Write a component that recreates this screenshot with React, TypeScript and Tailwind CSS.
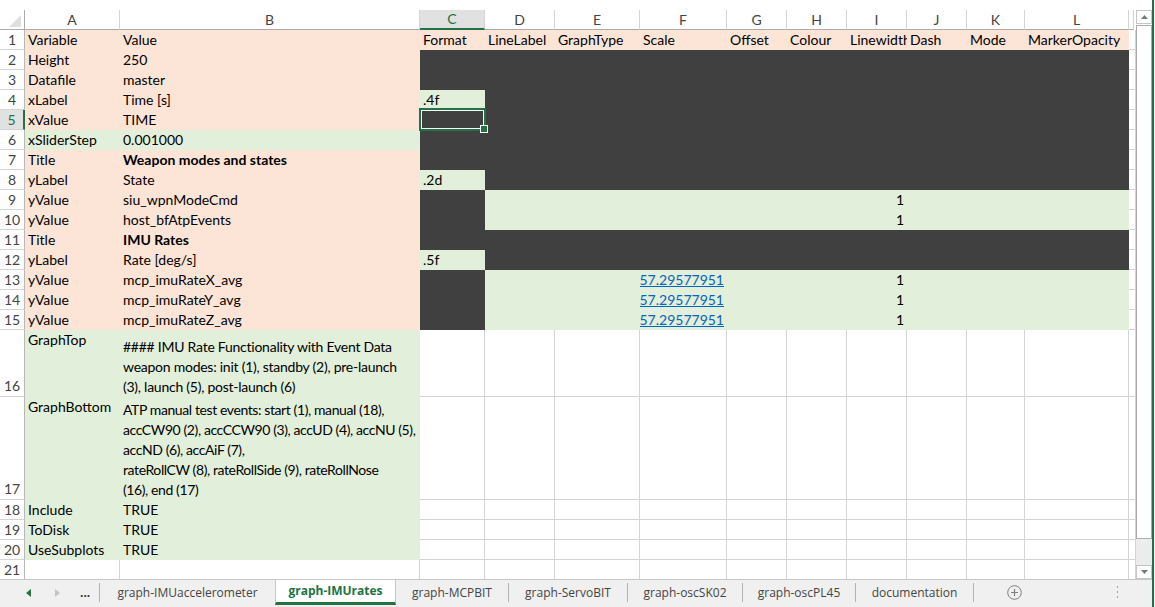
import type { ReactNode } from "react"
import clsx from "clsx"

// column widths include the right gridline pixel
const COLS = [
  { l: "A", w: "w-[95px]" },
  { l: "B", w: "w-[300px]" },
  { l: "C", w: "w-[65px]" },
  { l: "D", w: "w-[70px]" },
  { l: "E", w: "w-[85px]" },
  { l: "F", w: "w-[87px]" },
  { l: "G", w: "w-[60px]" },
  { l: "H", w: "w-[60px]" },
  { l: "I", w: "w-[60px]" },
  { l: "J", w: "w-[60px]" },
  { l: "K", w: "w-[58px]" },
  { l: "L", w: "w-[104px]" },
  { l: "", w: "w-[5px]" },
]

const KIND: Record<string, string> = {
  p: "bg-[#fce4d6]",
  g: "bg-[#e2efda]",
  d: "bg-[#404040]",
  s: "bg-[#404040]",
  w: "bg-white border-r border-b border-[#d4d4d4]",
  v: "bg-white border-r border-[#d4d4d4]",
}

type Cell = string | { t: ReactNode; right?: boolean; bold?: boolean; link?: boolean }

interface RowDef {
  n: number
  kinds: string
  h?: string
  cells?: Record<number, Cell>
  tall?: boolean
  sel?: boolean
}

const DARK = "ppddddddddddw"
const FMT = "ppgdddddddddw"
const DATA = "ppdgggggggggw"
const NOTE = "ggwwwwwwwwwww"

const one = { t: "1", right: true }
const scale = { t: "57.29577951", right: true, link: true }

const ROWS: RowDef[] = [
  {
    n: 1,
    kinds: "ppppppppppppw",
    cells: {
      0: "Variable", 1: "Value", 2: "Format", 3: "LineLabel", 4: "GraphType", 5: "Scale",
      6: "Offset", 7: "Colour", 8: "Linewidth", 9: "Dash", 10: "Mode", 11: "MarkerOpacity",
    },
  },
  { n: 2, kinds: DARK, cells: { 0: "Height", 1: "250" } },
  { n: 3, kinds: DARK, cells: { 0: "Datafile", 1: "master" } },
  { n: 4, kinds: FMT, cells: { 0: "xLabel", 1: "Time [s]", 2: ".4f" } },
  { n: 5, kinds: "ppsdddddddddw", cells: { 0: "xValue", 1: "TIME" }, sel: true },
  { n: 6, kinds: "ggddddddddddw", cells: { 0: "xSliderStep", 1: "0.001000" } },
  { n: 7, kinds: DARK, cells: { 0: "Title", 1: { t: "Weapon modes and states", bold: true } } },
  { n: 8, kinds: FMT, cells: { 0: "yLabel", 1: "State", 2: ".2d" } },
  { n: 9, kinds: DATA, cells: { 0: "yValue", 1: "siu_wpnModeCmd", 8: one } },
  { n: 10, kinds: DATA, cells: { 0: "yValue", 1: "host_bfAtpEvents", 8: one } },
  { n: 11, kinds: DARK, cells: { 0: "Title", 1: { t: "IMU Rates", bold: true } } },
  { n: 12, kinds: FMT, cells: { 0: "yLabel", 1: "Rate [deg/s]", 2: ".5f" } },
  { n: 13, kinds: DATA, cells: { 0: "yValue", 1: "mcp_imuRateX_avg", 5: scale, 8: one } },
  { n: 14, kinds: DATA, cells: { 0: "yValue", 1: "mcp_imuRateY_avg", 5: scale, 8: one } },
  { n: 15, kinds: DATA, cells: { 0: "yValue", 1: "mcp_imuRateZ_avg", 5: scale, 8: one } },
  {
    n: 16,
    kinds: NOTE,
    h: "h-[67px]",
    tall: true,
    cells: {
      0: "GraphTop",
      1: {
        t: (
          <div className="tracking-[-0.25px]">
            <div>#### IMU Rate Functionality with Event Data</div>
            <div>weapon modes: init (1), standby (2), pre-launch</div>
            <div>(3), launch (5), post-launch (6)</div>
          </div>
        ),
      },
    },
  },
  {
    n: 17,
    kinds: NOTE,
    h: "h-[103px]",
    tall: true,
    cells: {
      0: "GraphBottom",
      1: {
        t: (
          <div className="tracking-[-0.4px]">
            <div>ATP manual test events: start (1), manual (18),</div>
            <div>accCW90 (2), accCCW90 (3), accUD (4), accNU (5),</div>
            <div>accND (6), accAiF (7),</div>
            <div>rateRollCW (8), rateRollSide (9), rateRollNose</div>
            <div>(16), end (17)</div>
          </div>
        ),
      },
    },
  },
  { n: 18, kinds: NOTE, cells: { 0: "Include", 1: "TRUE" } },
  { n: 19, kinds: NOTE, cells: { 0: "ToDisk", 1: "TRUE" } },
  { n: 20, kinds: NOTE, cells: { 0: "UseSubplots", 1: "TRUE" } },
  { n: 21, kinds: "vvvvvvvvvvvvv", h: "h-[19px]" },
]

function SheetRow({ row }: { row: RowDef }) {
  return (
    <div className={clsx("flex", row.h ?? "h-[20px]")}>
      <div
        className={clsx(
          "flex w-[25px] shrink-0 justify-center border-r border-b border-b-[#d4d4d4]",
          row.tall ? "items-end" : "items-center",
          row.sel ? "border-r-2 border-r-[#217346] bg-[#e1e1e1] text-[#217346]" : "border-r-[#b8b8b8] text-[#444]",
          row.n === 21 && "border-b-0"
        )}
      >
        {row.n}
      </div>
      {COLS.map((col, i) => {
        const raw = row.cells?.[i]
        const c = typeof raw === "string" ? { t: raw } : raw
        return (
          <div
            key={i}
            className={clsx(
              "flex shrink-0 overflow-hidden whitespace-nowrap px-[3px]",
              col.w,
              KIND[row.kinds[i]],
              row.tall ? (i === 1 ? "items-end" : "items-start") : "items-center",
              c?.right && "justify-end",
              c?.bold && "font-bold",
              c?.link && "text-[#0563c1] underline"
            )}
          >
            {c?.t}
          </div>
        )
      })}
    </div>
  )
}

function ColumnHeader() {
  return (
    <div className="flex h-[20px]">
      <div className="relative w-[25px] shrink-0 border-r border-b border-[#ababab]">
        <svg className="absolute left-0 top-0" width="24" height="19" viewBox="0 0 24 19">
          <polygon points="9,17 21,17 21,5" fill="#dfdfdf" />
        </svg>
      </div>
      {COLS.map((col) => (
        <div
          key={col.l}
          className={clsx(
            "flex shrink-0 items-center justify-center border-r border-b border-r-[#d4d4d4]",
            col.w,
            col.l === "C"
              ? "border-b-2 border-b-[#217346] bg-[#e1e1e1] text-[#217346]"
              : "border-b-[#ababab] text-[#444]"
          )}
        >
          {col.l}
        </div>
      ))}
    </div>
  )
}

function Sheet() {
  return (
    <div className="relative w-[1134px] shrink-0 pt-[10px] font-['Lato',sans-serif] text-[14px] leading-[20px] text-black">
      <ColumnHeader />
      {ROWS.map((r) => (
        <SheetRow key={r.n} row={r} />
      ))}
      {/* active cell C5 */}
      <div className="absolute left-[419px] top-[108px] h-[23px] w-[67px] border-2 border-[#217346]">
        <div className="h-full w-full border border-white" />
      </div>
      <div className="absolute left-[480px] top-[125px] h-[8px] w-[8px] border border-white bg-[#217346]" />
    </div>
  )
}

function ScrollBar() {
  return (
    <div className="flex w-[18px] shrink-0 flex-col pl-[2px] pt-[10px]">
      <div className="flex h-[14px] items-center justify-center border border-[#c6c6c6] bg-white">
        <svg width="7" height="4" viewBox="0 0 7 4">
          <polygon points="0,4 7,4 3.5,0" fill="#7a7a7a" />
        </svg>
      </div>
      <div className="mt-[1px] h-[514px] border border-[#ababab] bg-white" />
      <div className="flex-1 bg-[#ececec]" />
      <div className="flex h-[14px] items-center justify-center border border-[#c6c6c6] bg-white">
        <svg width="7" height="4" viewBox="0 0 7 4">
          <polygon points="0,0 7,0 3.5,4" fill="#7a7a7a" />
        </svg>
      </div>
    </div>
  )
}

function Sep() {
  return <span className="mt-[3px] h-[19px] w-px shrink-0 bg-[#b4b4b4]" />
}

function Tab({ label, w }: { label: string; w: string }) {
  return <div className={clsx("flex shrink-0 items-center justify-center pb-[2px]", w)}>{label}</div>
}

function TabBar() {
  return (
    <div className="flex h-[28px] border-t border-[#c6c6c6] bg-[#f0f0f0] font-['Open_Sans',sans-serif] text-[12px] text-[#444]">
      <div className="flex w-[99px] shrink-0 items-center pb-[2px]">
        <svg className="ml-[26px]" width="5" height="8" viewBox="0 0 5 8">
          <polygon points="5,0 5,8 0,4" fill="#217346" />
        </svg>
        <svg className="ml-[24px]" width="5" height="8" viewBox="0 0 5 8">
          <polygon points="0,0 0,8 5,4" fill="#c4c4c4" />
        </svg>
        <span className="ml-[20px] font-bold text-[#333]">...</span>
      </div>
      <Sep />
      <Tab label="graph-IMUaccelerometer" w="w-[175px]" />
      <div className="flex h-[25px] w-[121px] shrink-0 items-center justify-center border-x border-b-[3px] border-x-[#c6c6c6] border-b-[#217346] bg-white font-bold text-[#217346]">
        graph-IMUrates
      </div>
      <Tab label="graph-MCPBIT" w="w-[112px]" />
      <Sep />
      <Tab label="graph-ServoBIT" w="w-[118px]" />
      <Sep />
      <Tab label="graph-oscSK02" w="w-[114px]" />
      <Sep />
      <Tab label="graph-oscPL45" w="w-[112px]" />
      <Sep />
      <Tab label="documentation" w="w-[117px]" />
      <Sep />
      <div className="flex w-[80px] shrink-0 items-center justify-center pb-[2px]">
        <svg width="15" height="15" viewBox="0 0 15 15">
          <circle cx="7.5" cy="7.5" r="6.8" fill="none" stroke="#7f7f7f" strokeWidth="1" />
          <path d="M7.5 4v7M4 7.5h7" stroke="#7f7f7f" strokeWidth="1.2" />
        </svg>
      </div>
      <div className="flex flex-1 items-center justify-end pb-[2px] pr-[33px]">
        <svg width="3" height="13" viewBox="0 0 3 13">
          <rect x="1" y="0" width="1" height="2" fill="#a0a0a0" />
          <rect x="1" y="5" width="1" height="2" fill="#a0a0a0" />
          <rect x="1" y="10" width="1" height="2" fill="#a0a0a0" />
        </svg>
      </div>
    </div>
  )
}

export default function App() {
  return (
    <div className="flex h-[607px] w-[1155px] overflow-hidden bg-white">
      <div className="flex w-[1152px] shrink-0 flex-col">
        <div className="flex h-[579px]">
          <Sheet />
          <ScrollBar />
        </div>
        <TabBar />
      </div>
      <div className="w-[2px] shrink-0 bg-[#217346]" />
    </div>
  )
}
